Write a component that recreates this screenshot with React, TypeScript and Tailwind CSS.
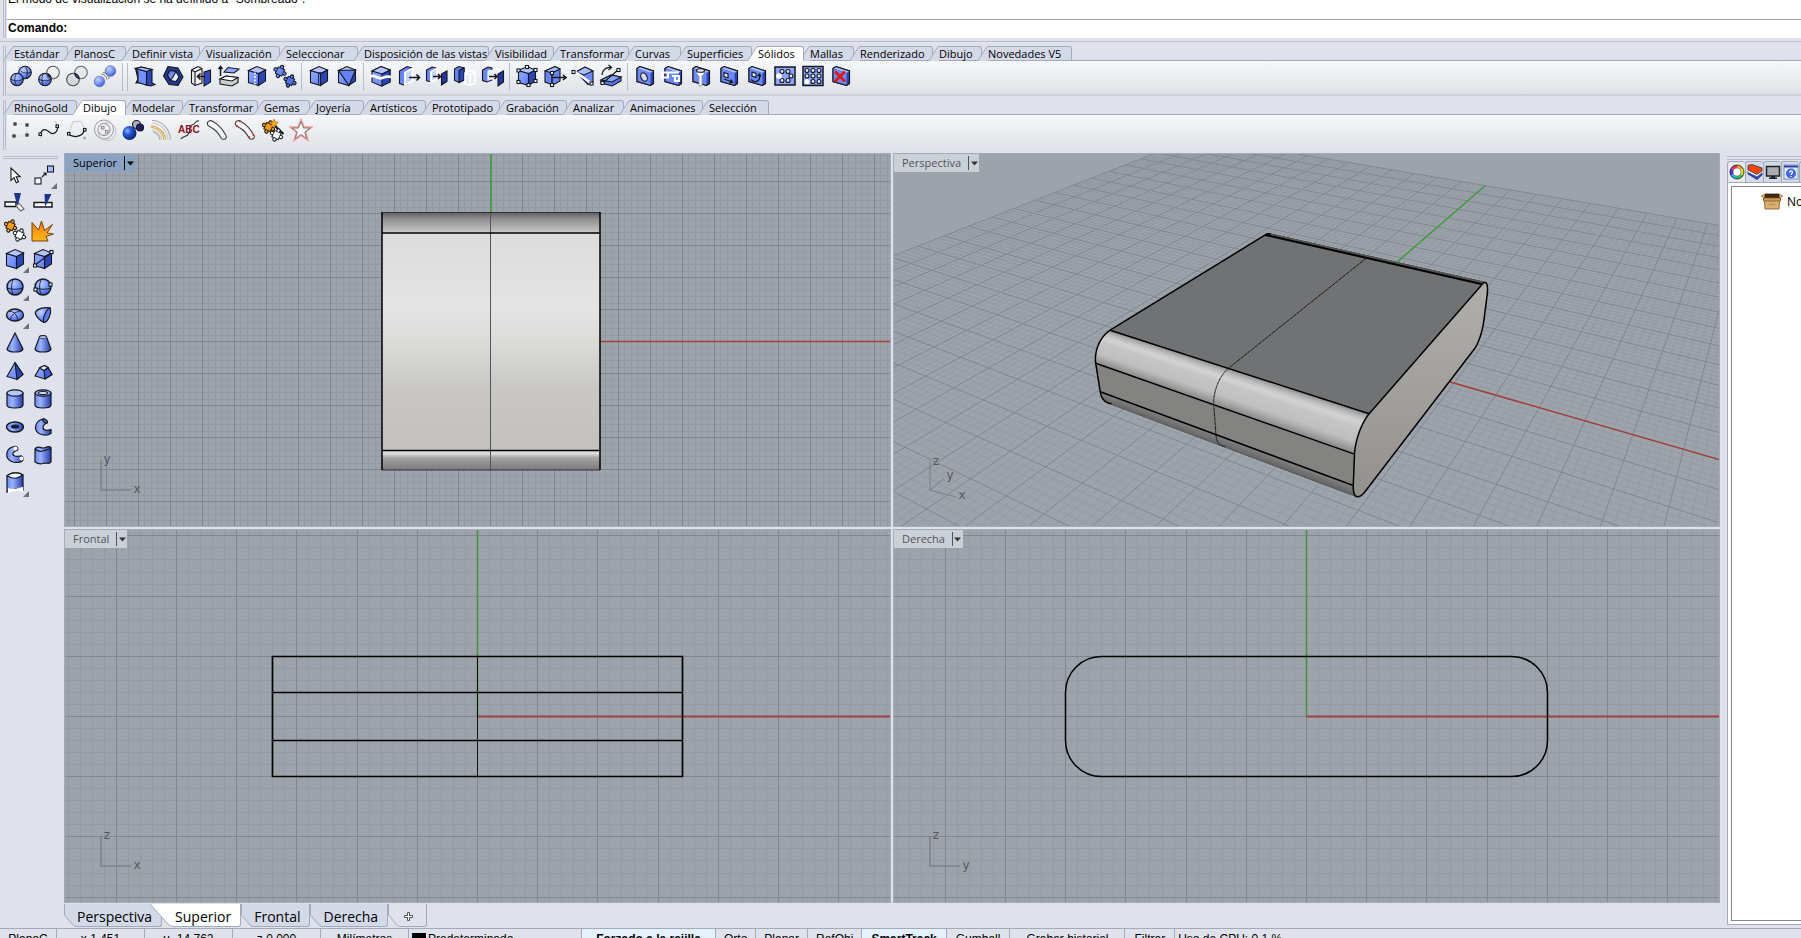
import React from 'react'
import clsx from 'clsx'

type IconProps = { children: React.ReactNode }
type Vec3 = [number, number, number]
type Tab = { label: string; width: number }

const INK = '#15171c'

function Icon({ children }: IconProps) {
  return (
    <svg className="w-6 h-6 shrink-0" viewBox="0 0 24 24" fill="none" stroke={INK} strokeWidth="1.1" aria-hidden="true">
      {children}
    </svg>
  )
}

function Gradients() {
  return (
    <svg className="absolute w-0 h-0" aria-hidden="true">
      <defs>
        <radialGradient id="ball" cx="0.35" cy="0.3" r="0.8">
          <stop offset="0" stopColor="#c2d2ff" />
          <stop offset="0.5" stopColor="#7b98ff" />
          <stop offset="1" stopColor="#2f4cc0" />
        </radialGradient>
        <radialGradient id="darkBall" cx="0.35" cy="0.35" r="0.8">
          <stop offset="0" stopColor="#8fb4ff" />
          <stop offset="0.35" stopColor="#2458d8" />
          <stop offset="1" stopColor="#04124e" />
        </radialGradient>
        <linearGradient id="face" x1="0" y1="0" x2="1" y2="1">
          <stop offset="0" stopColor="#94aeff" />
          <stop offset="1" stopColor="#5f7df6" />
        </linearGradient>
        <linearGradient id="tube">
          <stop offset="0" stopColor="#6c8cf8" />
          <stop offset="0.35" stopColor="#9ab2ff" />
          <stop offset="1" stopColor="#233ca8" />
        </linearGradient>
        <linearGradient id="flame" x1="0" y1="0" x2="0" y2="1">
          <stop offset="0" stopColor="#f07c0c" />
          <stop offset="1" stopColor="#ffb81c" />
        </linearGradient>
        <linearGradient id="rollTop" x1="0" y1="0" x2="0" y2="1">
          <stop offset="0" stopColor="#5a5a5c" />
          <stop offset="0.3" stopColor="#8c8c8e" />
          <stop offset="1" stopColor="#c8c8c8" />
        </linearGradient>
        <linearGradient id="sheet" x1="0" y1="0" x2="0" y2="1">
          <stop offset="0" stopColor="#dcdcdc" />
          <stop offset="0.35" stopColor="#e4e4e4" />
          <stop offset="0.5" stopColor="#dbdbd9" />
          <stop offset="0.72" stopColor="#c8c7c5" />
          <stop offset="1" stopColor="#c3c1be" />
        </linearGradient>
        <linearGradient id="rollBottom" x1="0" y1="0" x2="0" y2="1">
          <stop offset="0" stopColor="#c9c9c9" />
          <stop offset="0.15" stopColor="#e2e2e2" />
          <stop offset="0.4" stopColor="#a3a3a3" />
          <stop offset="1" stopColor="#7a7a7a" />
        </linearGradient>
        <linearGradient id="sideFace" x1="0" y1="0" x2="0" y2="1">
          <stop offset="0" stopColor="#b1afab" />
          <stop offset="1" stopColor="#93918e" />
        </linearGradient>
      </defs>
    </svg>
  )
}

function Cube() {
  return (
    <>
      <path d="M3.5 6.5 13.5 9.5V21.5L3.5 18.5Z" fill="url(#face)" />
      <path d="M13.5 9.5 20.5 6V17L13.5 21.5Z" fill="#2c45b8" />
      <path d="M3.5 6.5 12 2.5 20.5 6 13.5 9.5Z" fill="#b3c6ff" />
    </>
  )
}

function Slab() {
  return (
    <>
      <path d="M4 4.5 7 2.5 20.5 7V19.5L17.5 21.5 4 17.5Z" fill="#2c45b8" />
      <path d="M4 4.5 7 2.5 20.5 7 17.5 9Z" fill="#a7bcff" stroke="none" />
      <path d="M4 4.5 17.5 9V21.5L4 17.5Z" fill="#6b89f7" stroke="none" />
      <path d="M4 4.5 7 2.5 20.5 7V19.5L17.5 21.5 4 17.5Z" />
    </>
  )
}

function Node({ x, y }: { x: number; y: number }) {
  return <rect x={x - 1.5} y={y - 1.5} width="3" height="3" fill="#fff" />
}

function Piece({ x, y, fill }: { x: number; y: number; fill: string }) {
  return (
    <path
      transform={`translate(${x} ${y}) rotate(25)`}
      d="M-3.500-3.500H-1A1.700 1.700 0 1 1 1-3.500H3.500V-1A1.700 1.700 0 1 1 3.500 1V3.500H1A1.700 1.700 0 1 1-1 3.500H-3.500V1A1.700 1.700 0 1 1-3.500-1Z"
      fill={fill}
      strokeWidth="1"
    />
  )
}

const solidIcons: Record<string, React.ReactNode> = {
  union: (
    <>
      <circle cx="16" cy="8.5" r="6.3" fill="url(#ball)" />
      <circle cx="8" cy="15.5" r="6.3" fill="url(#ball)" />
      <path d="M8 9.200c-3 3-3 9.500 0 12.600M1.800 15c4 2.500 8.500 2.500 12.400 0M16 2.200c2.500 2.500 3 8 1 12.400M12 7.500c3 2 7 2 10 .6" strokeWidth="0.8" />
    </>
  ),
  difference: (
    <>
      <circle cx="8" cy="15.5" r="6.3" fill="url(#ball)" />
      <path d="M9.900 9.500a6.300 6.300 0 0 1 4.300 5 6.300 6.300 0 0 1-4.300-5z" fill="#16287c" />
      <circle cx="16" cy="8.5" r="6.3" stroke="#555" />
      <path d="M7 9.300c-3 3-2.500 9.500 0 12.400M1.800 15c4 2.500 8.500 2.500 12.400 0" strokeWidth="0.8" />
    </>
  ),
  intersection: (
    <>
      <circle cx="8" cy="15.5" r="6.3" stroke="#444" fill="#d8dae0" />
      <circle cx="16" cy="8.5" r="6.3" stroke="#666" fill="#e0e2e8" fillOpacity="0.6" />
      <path d="M9.800 9.500a6.300 6.300 0 0 1 4.400 5 6.300 6.300 0 0 1-4.400-5z" fill="#3b58cf" />
    </>
  ),
  split: (
    <>
      <circle cx="17.500" cy="7" r="5.300" fill="url(#ball)" stroke="#6a78b0" strokeWidth="0.800" />
      <circle cx="6.500" cy="17.500" r="5.300" fill="url(#ball)" stroke="#6a78b0" strokeWidth="0.800" />
      <path d="M10 8.500c2.500 0 6 3 6 6.500M8.500 10c2.500 0 5.500 3 5.500 5.500" stroke="#777" strokeWidth="1" />
    </>
  ),
  bend: (
    <>
      <path d="M2.500 4.500 8 3 19 5.500V19l3 1.500-4 1.500-5-1V20l-6-1.500-4 .5L5 15z" fill="#2c45b8" />
      <path d="M2.500 4.500 13.500 7.500V21L5 18.500V8z" fill="#7391fb" />
      <path d="M2.500 4.500 8 3l11 2.500-5.500 2z" fill="#a9beff" />
    </>
  ),
  shell: (
    <>
      <path d="M7 2.500 17 4l5 9-5 8.500-9-1L2.500 12z" fill="#22388f" />
      <path d="M9 6.500 15 7.500 18 13l-3 4.500-5.500-1L6.500 11z" fill="#eef" />
      <path d="M9 6.500 15 7.500 12 13l-2.500 3.500-3-5.500z" fill="#6d8cf8" />
    </>
  ),
  offset: (
    <>
      <path d="M2.500 6 9 2.500 13 4.500V19L6 21.500 2.500 19z" fill="#eee" />
      <path d="M6 8 13 4.500M6 8v13.500M2.500 6 6 8" />
      <path d="M15 8 21.500 6v12L15 22z" fill="#2f49c4" />
      <path d="M16 12.500H9M11.500 9.500l-3 3 3 3" strokeWidth="1.600" />
    </>
  ),
  extrudeUp: (
    <>
      <path d="M3 15 9 12 21 13.500v5L15 22 3 20z" fill="#ccc" />
      <path d="M3 15 9 12 21 13.500 15 17z" fill="#fff" />
      <path d="M7 8 11 3.500l11 1.500-5 4z" fill="#8fa9ff" />
      <path d="M3.500 12V3M1.500 5l2-2.500 2 2.500" strokeWidth="1.500" />
    </>
  ),
  seam: (
    <>
      <Cube />
      <path d="M10 8.500V20.500" stroke="#fff" strokeWidth="1.500" strokeDasharray="2 1.500" />
    </>
  ),
  puzzle: (
    <>
      <Piece x={7} y={7.500} fill="#6d8cf8" />
      <Piece x={17} y={17} fill="#5371e6" />
    </>
  ),
  fillet: (
    <>
      <Cube />
      <path d="M12 8.500c3 1 5-.5 7.500-2M11.500 20V9" strokeWidth="0.800" />
    </>
  ),
  chamfer: (
    <>
      <Cube />
      <path d="M3.500 6.500 20.500 6 14 21.500z" fill="#6582f4" />
    </>
  ),
  cutPlane: (
    <>
      <path d="M3 7 12 2.500 21 6v12l-9 4-9-4z" fill="url(#face)" />
      <path d="M21 6v12l-8 4V10z" fill="#2c45b8" />
      <path d="M3 7 12 2.500 21 6 13 10z" fill="#b3c6ff" />
      <path d="M1 13c5-4 7 3 12 1 4-1.500 6-2 9-1" stroke="#fff" strokeWidth="2.800" />
    </>
  ),
  moveFace: (
    <>
      <path d="M2.500 7 10 2.500 15 4v13l-7 4.500-5.500-2z" fill="#6885f4" />
      <path d="M8 8.500 15.500 4.500V17L8 21z" fill="#c9d5ff" stroke="#fff" strokeWidth="1.800" />
      <path d="M12 13.500h10M19.500 10.500l3 3-3 3" strokeWidth="1.500" />
    </>
  ),
  extrudeFace: (
    <>
      <path d="M1.500 6 7 3 11 4v11l-5 3-4.500-1.500z" fill="#6885f4" />
      <path d="M6 7.500 12 4.500V15l-6 3z" fill="#c9d5ff" stroke="#fff" strokeWidth="1.800" />
      <path d="M16.500 10 22 7v10.500L16.500 21z" fill="#20389f" />
      <path d="M8 12.500h7.500M13 10l2.500 2.500L13 15" strokeWidth="1.500" />
    </>
  ),
  copyFace: (
    <>
      <path d="M1.500 5 6 2.500 11 4v12l-5 2.500-4.500-2z" fill="#6885f4" />
      <path d="M6 6.500 11 4v12l-5 2.500z" fill="#2c45b8" />
      <path d="M12 9 17 6.500 22 8v11l-5 2.500-5-2zM12 9l5 2 5-3M17 11v10.500" stroke="#fff" strokeWidth="1.500" />
    </>
  ),
  moveHole: (
    <>
      <path d="M1.500 6 7 3 11 4v12l-5 2-4.500-1.500z" fill="#6885f4" />
      <path d="M7 7 18 5v8L7 16z" fill="#eef1ff" stroke="#fff" />
      <path d="M17 10 22.500 7v11L17 22z" fill="#20389f" />
      <path d="M8 12.500h8M13.500 10l2.500 2.500-2.500 2.500" strokeWidth="1.500" />
    </>
  ),
  cage: (
    <>
      <Cube />
      <Node x={3.5} y={6.500} />
      <Node x={12} y={3} />
      <Node x={20.5} y={6} />
      <Node x={13.5} y={21} />
      <Node x={3.5} y={18} />
      <Node x={20.5} y={17} />
    </>
  ),
  moveEdge: (
    <>
      <path d="M2 7 12 2.500 17 5v12l-7 4-8-3z" fill="#6885f4" />
      <path d="M2 7 12 2.500 17 5l-8 4z" fill="#a9beff" />
      <path d="M9 9v12M9 13.500h14M20 11l3 2.500-3 2.500" strokeWidth="1.500" />
      <Node x={9} y={9} />
      <Node x={9} y={21} />
    </>
  ),
  wedge: (
    <>
      <path d="M5 8 14 3l8 4v11l-5 2.500z" fill="#6d8cf8" />
      <path d="M5 8 14 3l8 4-9 4z" fill="#a9beff" />
      <path d="M3 7 20 19" stroke="#fff" strokeWidth="2.500" />
      <Node x={2.5} y={8} />
      <Node x={20.5} y={19.5} />
    </>
  ),
  rotateEdge: (
    <>
      <path d="M2 16 12 11 22 13v4l-9 5-11-3z" fill="#5673ec" />
      <path d="M2 16 12 11 22 13l-9 5z" fill="#8ca6ff" />
      <path d="M4 19 19 6M3 11C3 6 7 3 12 3.500M9.500 1l3 2.500-3 2.500" strokeWidth="1.300" />
      <Node x={19.5} y={6} />
      <Node x={3.5} y={19} />
    </>
  ),
  hole: (
    <>
      <Slab />
      <ellipse cx="11" cy="13" rx="3" ry="4.500" fill="#d8dce8" transform="rotate(-25 11 13)" />
    </>
  ),
  punch: (
    <>
      <Slab />
      <path d="M1 8.500h6v5H1zM8 8.500h10M11 12h7v5h-4v-5" stroke="#fff" strokeWidth="2" />
    </>
  ),
  revolveHole: (
    <>
      <Slab />
      <path d="M8 7h7v3l-2 2v10h-3V12l-2-2z" fill="#fff" stroke="#999" strokeWidth="0.800" />
      <ellipse cx="11.500" cy="6.500" rx="4" ry="1.800" fill="#dde4ff" />
    </>
  ),
  slideHole: (
    <>
      <Slab />
      <path d="M7 8.500 11 10v4l-4-1.500z" fill="#dde4ff" />
      <path d="M7 15l8 3M13.500 15.500l2 2.700-3 .8" strokeWidth="1.300" />
    </>
  ),
  turnHole: (
    <>
      <Slab />
      <path d="M7 8 11 9.500v4L7 12z" fill="#dde4ff" />
      <path d="M6 15.500c3 3 7 3 8.500-1V11M12.500 12l2-2 1.500 2.500" strokeWidth="1.300" />
    </>
  ),
  polarArray: (
    <>
      <rect x="2" y="3" width="20" height="18" fill="#8aa4ff" strokeWidth="1.500" />
      {[[9, 7.500], [15, 7.500], [18, 12], [15, 16.500], [9, 16.500]].map(([x, y]) => (
        <circle key={`${x}-${y}`} cx={x} cy={y} r="2" fill="#dfe6ff" />
      ))}
      <circle cx="6" cy="12" r="2.300" fill="#fff" stroke="#fff" />
    </>
  ),
  gridArray: (
    <>
      <rect x="2" y="2.500" width="20" height="19" fill="#8aa4ff" strokeWidth="1.500" />
      {[6, 12, 18].map((x) =>
        [6.500, 12, 17.500].map((y) => (
          <circle
            key={`${x}-${y}`}
            cx={x}
            cy={y}
            r="2"
            fill={x === 6 && y > 17 ? '#fff' : '#dfe6ff'}
            stroke={x === 6 && y > 17 ? '#fff' : INK}
          />
        )),
      )}
    </>
  ),
  deleteHole: (
    <>
      <Slab />
      <path d="M6 7.500 16 17.500M16 7.500 6 17.500" stroke="#ee1111" strokeWidth="2.600" />
    </>
  ),
}

const drawIcons: Record<string, React.ReactNode> = {
  points: (
    <>
      {[[6, 6], [18, 7], [5, 18], [18, 17]].map(([x, y]) => (
        <rect key={`${x}-${y}`} x={x - 1} y={y - 1} width="2" height="2" fill="#fff" />
      ))}
      <path d="M9 6h6M18 10v4M8 18h7" stroke="#bbb" strokeWidth="0.800" strokeDasharray="1 2" />
    </>
  ),
  curve: (
    <>
      <path d="M3.500 15.500C6 9 10 12 13 14.500s8 0 7.500-6" strokeWidth="1.200" />
      <path d="M4 20c0-3 0-4 1-6M18 3l3 5" stroke="#aaa" strokeWidth="0.800" />
      <rect x="2" y="15" width="2.500" height="2.500" fill="#fff" />
      <rect x="19" y="7" width="2.500" height="2.500" fill="#fff" />
    </>
  ),
  polycurve: (
    <>
      <path d="M3.500 15.500C7 20 17 20 19.500 12" strokeWidth="1.200" />
      <path d="M4 15 8 3.500h8L20 11" stroke="#bbb" strokeWidth="0.800" />
      <rect x="2.500" y="14.500" width="2.500" height="2.500" fill="#fff" />
      <rect x="18.500" y="10.500" width="2.500" height="2.500" fill="#fff" />
      <circle cx="19.500" cy="20" r="1.500" fill="#aaa" stroke="none" />
    </>
  ),
  circles: (
    <>
      <circle cx="11" cy="11.500" r="9.500" stroke="#9a9a9a" strokeWidth="1" />
      <circle cx="11" cy="11.500" r="6" stroke="#888" strokeWidth="1" />
      <circle cx="14" cy="13.500" r="9" stroke="#c4c4c4" strokeWidth="1" />
      <rect x="8.500" y="8.500" width="2.500" height="2.500" stroke="#777" strokeWidth="0.800" />
      <rect x="12.500" y="12.500" width="2.500" height="2.500" stroke="#777" strokeWidth="0.800" />
    </>
  ),
  balls: (
    <>
      <circle cx="8.500" cy="15" r="7" fill="url(#darkBall)" stroke="none" />
      <circle cx="15.500" cy="6.500" r="4" fill="#aab0c4" />
      <circle cx="19" cy="9.500" r="3.500" fill="#221c66" />
    </>
  ),
  arcs: (
    <>
      <path d="M3 2.500C13 2.500 21 11 21.500 21.500M4 14c4 1 6 3 7 8" stroke="#aaa" />
      <path d="M3 5C11 5 18 12 19 21.500M3 12c4 1 8 4 10 9.500" stroke="#c9c9c9" />
      <path d="M2 8.500c7 .5 12.500 6 14 13" stroke="#c3a04c" strokeWidth="2.600" />
      <path d="M2 8.500c7 .5 12.500 6 14 13" stroke="#f4dfa0" strokeWidth="1.200" />
    </>
  ),
  text: (
    <>
      <path d="M22 3c-4-1-3 3-7 4s-1 3-3 8-6 2-8 6" stroke="#333" />
      <text x="1" y="15" fontSize="10" fontWeight="700" fontFamily="Liberation Sans, sans-serif" fill="#8c1420" stroke="none">
        ABC
      </text>
    </>
  ),
  slot: (
    <path d="M2.500 6.500C1.500 3.500 5 1.500 8 3.500c6 3.500 9.500 7.500 13 14 1.500 3.500-3 5-5 2.500-3-5.500-5-8-11.500-11.500-1-.5-1.700-1-2-2z" fill="#f4f4f4" stroke="#444" />
  ),
  slotPoints: (
    <>
      <path d="M2.500 6.500C1.500 3.500 5 1.500 8 3.500c6 3.500 9.500 7.500 13 14 1.500 3.500-3 5-5 2.500-3-5.500-5-8-11.500-11.500-1-.5-1.700-1-2-2z" fill="#f4f4f4" stroke="#444" />
      <path d="M7 2.500v1.500M3 8h1.500M15.500 19h1.500M20.500 16.500v1.500" stroke="#e11" strokeWidth="1.500" />
    </>
  ),
  explode: (
    <>
      <Piece x={7.500} y={9} fill="#f5980c" />
      <path d="M13 1l1.300 3 3.200.3-2.500 2 .8 3.200L13 7.800l-2.800 1.700.8-3.200-2.500-2 3.200-.3z" fill="#ffa514" stroke="#c26a00" strokeWidth="0.600" />
      <path d="M14 8 22.500 16" strokeWidth="2.200" />
      <Piece x={15.500} y={17} fill="#fff" />
    </>
  ),
  star: (
    <>
      <path d="M12 1.500 15 9h8l-6.500 5 2.500 8.500-7-5-7 5L7.500 14 1 9h8z" stroke="#f39a9a" strokeWidth="1.500" />
      <path d="M12 3.500 14.500 10h6.500l-5.200 4 1.900 6.500-5.700-4-5.700 4L8.200 14 3 10h6.500z" fill="#f6f6f8" stroke="#666" strokeWidth="0.800" />
    </>
  ),
}

const sideIcons: Record<string, React.ReactNode> = {
  pointer: <path d="M8 5v12.500l3-2.800 2.300 5 2.200-1-2.300-4.900h4z" fill="#fff" strokeWidth="1.100" />,
  control: (
    <>
      <rect x="16.500" y="3" width="6" height="6" fill="#a9beff" />
      <rect x="4" y="15" width="6" height="6" fill="#fff" />
      <path d="M11 14l4-4M12.500 10H15v2.500" />
    </>
  ),
  trim: (
    <>
      <path d="M2 11h11v4.500H2z" fill="#fff" strokeWidth="1.400" />
      <path d="M11 2h7l-3.500 14z" fill="#1c3588" stroke="none" />
      <path d="M13 14.500 16 12.500l5 5.500-3.500 2z" fill="#f4f4f4" stroke="#666" />
    </>
  ),
  splitCurve: (
    <>
      <path d="M3 11.500h18V16H3z" fill="#fff" strokeWidth="1.400" />
      <path d="M13.500 3h7L14 16z" fill="#1c3588" stroke="none" />
    </>
  ),
  join: (
    <>
      <Piece x={7.500} y={7} fill="#ff9f10" />
      <Piece x={16.500} y={16} fill="#fff" />
    </>
  ),
  explode: <path d="M1 3.500 7.500 11 10.500 2l3 9.500 8-6-5.500 8.500 6.500 1-7.500 2.500 2 4.500H1z" fill="url(#flame)" stroke="#6a3400" strokeWidth="0.900" />,
  box: <Cube />,
  boxPoints: (
    <>
      <Cube />
      <path d="M4 18 20 6" />
      <Node x={4} y={18.500} />
      <Node x={20.5} y={5} />
    </>
  ),
  sphere: (
    <>
      <circle cx="12" cy="12" r="8" fill="url(#ball)" strokeWidth="1.400" />
      <path d="M10.500 4c-2.500 4-2.500 12 0 16M4 13c5 1.700 11 1.700 16 0" strokeWidth="0.900" />
    </>
  ),
  spherePoints: (
    <>
      <circle cx="12" cy="12" r="8" fill="url(#ball)" strokeWidth="1.400" />
      <path d="M10.500 4c-2.500 4-2.500 12 0 16M4 13c5 1.700 11 1.700 16 0" strokeWidth="0.900" />
      <Node x={4.5} y={14.500} />
      <Node x={19.5} y={9.500} />
    </>
  ),
  ellipsoid: (
    <>
      <ellipse cx="12" cy="12" rx="8.500" ry="6" fill="url(#ball)" strokeWidth="1.400" />
      <path d="M6 8c6 1 8 4 9 9.500M17.500 8c-6 1-9 4-10 8.500" strokeWidth="0.900" />
    </>
  ),
  paraboloid: (
    <>
      <path d="M4.500 9C7 5 14 4 19 5c1 5-2 13-6 14.500C9 18 3.500 12 4.500 9z" fill="url(#ball)" strokeWidth="1.300" />
      <path d="M19 5c2 5-2 14-6 14.500-2-3.500 2-13 6-14.500z" fill="#5c7bf0" />
    </>
  ),
  cone: <path d="M12 2 20 18c-1 4-15 4-16 0z" fill="url(#tube)" strokeWidth="1.200" />,
  cutCone: (
    <>
      <path d="M8.500 6c0-2 7-2 7 0L20 18c-1 4-15 4-16 0z" fill="url(#tube)" strokeWidth="1.200" />
      <ellipse cx="12" cy="6.200" rx="3.500" ry="1.500" fill="#b9caff" strokeWidth="0.700" />
    </>
  ),
  pyramid: (
    <>
      <path d="M12 3.500 20 15.500l-6 5-10-3z" fill="url(#face)" />
      <path d="M12 3.500 20 15.500l-6 5z" fill="#2c45b8" />
    </>
  ),
  cutPyramid: (
    <>
      <path d="M9 8.500 14 6.500l3 2 4 7-7 4.500-10-3z" fill="url(#face)" />
      <path d="M13 11.500l4-3 4 7-7 4.500z" fill="#3f5bd0" />
      <path d="M8.500 9 13 6.500 17 8.500l-4 3z" fill="#dfe6ff" />
    </>
  ),
  cylinder: (
    <>
      <path d="M4 6v12c0 4 16 4 16 0V6z" fill="url(#tube)" strokeWidth="1.200" />
      <ellipse cx="12" cy="6" rx="8" ry="3.200" fill="#b3c6ff" strokeWidth="1.200" />
    </>
  ),
  tube: (
    <>
      <path d="M4 6v12c0 4 16 4 16 0V6z" fill="url(#tube)" strokeWidth="1.200" />
      <ellipse cx="12" cy="6" rx="8" ry="3.200" fill="#8aa4ff" strokeWidth="1.200" />
      <ellipse cx="12" cy="6" rx="4.500" ry="1.500" fill="#dde4ff" />
    </>
  ),
  torus: (
    <>
      <ellipse cx="12" cy="12" rx="8.500" ry="5" fill="url(#tube)" strokeWidth="1.400" />
      <ellipse cx="12" cy="11.500" rx="3.500" ry="1.500" fill="#0f1c5c" />
    </>
  ),
  pipe: (
    <>
      <path d="M12 4C4 6 2 15 8 18.500c4 2 9 2 12 0v-4c-4 1.500-8 1-8-2 0-2 1.500-3.500 4-4.500-.5-2.500-2-4-4-4z" fill="url(#tube)" strokeWidth="1.200" />
      <ellipse cx="14" cy="6" rx="2.800" ry="1.500" fill="#4a66d8" transform="rotate(35 14 6)" />
    </>
  ),
  pipeRound: (
    <>
      <path d="M11 3.500c-9 2-10 13-1 15.500 4 1 9 .5 10-2 1-2-1-4.500-3-4-4 1-8 0-7-3 .5-1.500 2-2 4-2.500 2-1 .5-5-3-4z" fill="url(#tube)" strokeWidth="1.200" />
      <circle cx="12.500" cy="5.500" r="2" fill="#fff" stroke="none" />
      <circle cx="18.500" cy="15.500" r="2" fill="#fff" stroke="none" />
    </>
  ),
  extrudeCurve: (
    <>
      <path d="M4 6c2-4 5-1 8-1s5-3 8-.5V19c-2 3-5 0-8 1.500-3 1-5 .5-8-1.500z" fill="url(#tube)" strokeWidth="1.200" />
      <path d="M4 6c3 2.500 5 3 8 2s5-2 8-2" />
    </>
  ),
  patch: (
    <>
      <path d="M4 5c4-4 12-4 16-1v15c-4-2-12-1-16 2z" fill="url(#tube)" strokeWidth="1.200" />
      <path d="M4 5c4 1 5 3 9 2 3 0 4-2 7-3-4-3-12-3-16 1z" fill="#eef1ff" />
      <path d="M5 17c5 2 10 0 15-1v5c-4-2-11-1-15 1z" fill="#fff" stroke="none" />
    </>
  ),
}

const solidGroups = [
  ['union', 'difference', 'intersection', 'split'],
  ['bend', 'shell', 'offset', 'extrudeUp', 'seam', 'puzzle'],
  ['fillet', 'chamfer'],
  ['cutPlane', 'moveFace', 'extrudeFace', 'copyFace', 'moveHole'],
  ['cage', 'moveEdge', 'wedge', 'rotateEdge'],
  ['hole', 'punch', 'revolveHole', 'slideHole', 'turnHole', 'polarArray', 'gridArray', 'deleteHole'],
]

const mainTabs: Tab[] = [
  { label: 'Estándar', width: 60 },
  { label: 'PlanosC', width: 58 },
  { label: 'Definir vista', width: 74 },
  { label: 'Visualización', width: 80 },
  { label: 'Seleccionar', width: 78 },
  { label: 'Disposición de las vistas', width: 131 },
  { label: 'Visibilidad', width: 65 },
  { label: 'Transformar', width: 75 },
  { label: 'Curvas', width: 52 },
  { label: 'Superficies', width: 71 },
  { label: 'Sólidos', width: 52 },
  { label: 'Mallas', width: 50 },
  { label: 'Renderizado', width: 79 },
  { label: 'Dibujo', width: 49 },
  { label: 'Novedades V5', width: 90 },
]

const goldTabs: Tab[] = [
  { label: 'RhinoGold', width: 69 },
  { label: 'Dibujo', width: 49 },
  { label: 'Modelar', width: 57 },
  { label: 'Transformar', width: 75 },
  { label: 'Gemas', width: 52 },
  { label: 'Joyería', width: 54 },
  { label: 'Artísticos', width: 62 },
  { label: 'Prototipado', width: 74 },
  { label: 'Grabación', width: 67 },
  { label: 'Analizar', width: 57 },
  { label: 'Animaciones', width: 79 },
  { label: 'Selección', width: 66 },
]

const flyouts = ['control', 'box', 'sphere', 'ellipsoid', 'patch']

function TabStrip({ tabs, active }: { tabs: Tab[]; active: string }) {
  return (
    <div role="tablist" className="flex h-[15px] pl-[8px]">
      {tabs.map(({ label, width }) => {
        const on = label === active
        return (
          <button
            key={label}
            role="tab"
            aria-selected={on}
            className={clsx('relative flex shrink-0 -ml-1 text-left text-[11px] leading-[14px] whitespace-nowrap', on && 'z-10')}
            style={{ width: width + 4 }}
          >
            <svg className="w-[10px] h-[15px] shrink-0" viewBox="0 0 10 15" aria-hidden="true">
              <path d="M0 15 8 1.500 10 0.500V15Z" fill={on ? '#fff' : '#d4d9e8'} />
              <path d="M0 14.500 8 2 10 .5" fill="none" stroke="#a2abbc" />
            </svg>
            <span
              className={clsx(
                'h-[15px] flex-1 min-w-0 border-t border-r rounded-tr-[3px] border-[#a2abbc]',
                on ? 'bg-white' : 'bg-[#d4d9e8] border-b',
              )}
            >
              {label}
            </span>
          </button>
        )
      })}
    </div>
  )
}

function Grip() {
  return <div className="w-[3px] ml-[3px] mr-px border-x border-[#b4bbc9] shrink-0" />
}

function IconButton({ name, icons }: { name: string; icons: Record<string, React.ReactNode> }) {
  return (
    <button aria-label={name} className="relative w-7 h-7 flex items-center justify-center">
      <Icon>{icons[name]}</Icon>
      {icons === sideIcons && flyouts.includes(name) && (
        <svg className="absolute right-0 bottom-0 w-[6px] h-[6px]" viewBox="0 0 6 6" aria-hidden="true">
          <path d="M6 0V6H0Z" fill="#6e7076" />
        </svg>
      )}
    </button>
  )
}

function Axis({ x, y, labels }: { x: number; y: number; labels: [string, string] }) {
  return (
    <g>
      <path d={`M${x} ${y - 30}V${y}H${x + 30}`} fill="none" stroke="#7d8087" strokeWidth="1.500" />
      <g fontSize="12" fontFamily="DejaVu Sans, sans-serif" fill="#55585e" textAnchor="middle">
        <text x={x + 6} y={y - 27}>{labels[1]}</text>
        <text x={x + 36} y={y + 3}>{labels[0]}</text>
      </g>
    </g>
  )
}

// Orthogonal construction plane, 70 units each way with a heavy line every 5.
function PlaneGrid({ cx, cy, unit }: { cx: number; cy: number; unit: number }) {
  let minor = ''
  let major = ''
  const size = 70 * unit
  for (let i = -70; i <= 70; i++) {
    const x = Math.floor(cx + i * unit) + 0.5
    const y = Math.floor(cy + i * unit) + 0.5
    const d = `M${x} ${cy - size}V${cy + size}M${cx - size} ${y}H${cx + size}`
    if (i % 5 === 0) major += d
    else minor += d
  }
  return (
    <g fill="none">
      <path d={minor} stroke="#939aa2" />
      <path d={major} stroke="#83868e" />
    </g>
  )
}

// Camera 100 units from the origin, 30 degrees above the plane.
function project([x, y, z]: Vec3) {
  const right = 0.866 * x + 0.5 * y
  const up = -0.25 * x + 0.433 * y + 0.866 * z
  const depth = 100 - 0.433 * x + 0.75 * y - 0.5 * z
  return `${(412.5 + (779 * right) / depth).toFixed(2)} ${(186.5 - (779 * up) / depth).toFixed(2)}`
}

const line = (...pts: Vec3[]) => 'M' + pts.map(project).join('L')

function corner(x: number, cy: number, cz: number, from: number, to: number, steps = 12): Vec3[] {
  return Array.from({ length: steps + 1 }, (_, i) => {
    const a = ((from + ((to - from) * i) / steps) * Math.PI) / 180
    return [x, cy + 3 * Math.cos(a), cz + 3 * Math.sin(a)]
  })
}

function bands(cy: number, cz: number, from: number, to: number, shades: number[]) {
  const steps = 24
  const left = corner(-17, cy, cz, from, to, steps)
  const right = corner(17, cy, cz, from, to, steps)
  return Array.from({ length: steps }, (_, i) => {
    const t = (i / (steps - 1)) * (shades.length - 1)
    const k = Math.min(Math.floor(t), shades.length - 2)
    const v = Math.round(shades[k] + (shades[k + 1] - shades[k]) * (t - k))
    const fill = `rgb(${v},${v},${v})`
    return <path key={i} d={line(left[i], right[i], right[i + 1], left[i + 1]) + 'Z'} fill={fill} stroke={fill} strokeWidth="0.600" />
  })
}

function PerspectiveScene() {
  let minor = ''
  let major = ''
  for (let i = -70; i <= 70; i++) {
    const d = line([i, -70, 0], [i, 70, 0]) + line([-70, i, 0], [70, i, 0])
    if (i % 5 === 0) major += d
    else minor += d
  }
  const outline = (x: number) => [
    ...corner(x, 17, 2, 0, 90),
    ...corner(x, -17, 2, 90, 180),
    ...corner(x, -17, -2, 180, 270),
    ...corner(x, 17, -2, 270, 360),
  ]
  return (
    <g fill="none" strokeLinejoin="round">
      <path d={minor} stroke="#8c929a" strokeWidth="0.700" opacity="0.700" />
      <path d={major} stroke="#83868e" strokeWidth="1" />
      <path d={line([0, 0, 0], [0, 70, 0])} stroke="#449a45" strokeWidth="1.500" />
      <path d={line([0, 0, 0], [70, 0, 0])} stroke="#a0433f" strokeWidth="1.500" />

      {bands(17, 2, 0, 90, [60, 90])}
      {bands(-17, -2, 270, 180, [80, 90, 128])}
      <path d={line([-17, -20, 2], [17, -20, 2], [17, -20, -2], [-17, -20, -2]) + 'Z'} fill="#838381" />
      {bands(-17, 2, 180, 90, [138, 165, 192, 196, 198, 214, 190, 150])}
      <path d={line([-17, -17, 5], [17, -17, 5], [17, 17, 5], [-17, 17, 5]) + 'Z'} fill="#717274" />
      <path d={line(...outline(17)) + 'Z'} fill="url(#sideFace)" />

      <g stroke="#000" strokeWidth="1.500">
        <path d={line(...outline(17)) + 'Z'} />
        <path d={line(...corner(-17, 17, 2, 60, 90), ...corner(-17, -17, 2, 90, 180), ...corner(-17, -17, -2, 180, 240))} />
        <path d={line([-17, -17, 5], [17, -17, 5])} />
        <path d={line([-17, 17, 5], [17, 17, 5])} strokeWidth="2" />
        <path d={line([-17, -20, 2], [17, -20, 2])} />
        <path d={line([-17, -20, -2], [17, -20, -2])} />
      </g>
      <path
        d={line([0, 17, 5], ...corner(0, -17, 2, 90, 180), ...corner(0, -17, -2, 180, 240))}
        stroke="#111"
        strokeWidth="0.900"
        strokeDasharray="4 0.500"
      />
      <path d="M36 307V336L62 343M36 336 50 324" stroke="#7d8087" />
      <g fontSize="12" fontFamily="DejaVu Sans, sans-serif" fill="#55585e" textAnchor="middle">
        <text x="42" y="311">z</text>
        <text x="56" y="325">y</text>
        <text x="68" y="345">x</text>
      </g>
    </g>
  )
}

function TopScene() {
  return (
    <g fill="none">
      <PlaneGrid cx={425.5} cy={187.5} unit={6.4} />
      <path d="M426 0V187" stroke="#4b9c4c" strokeWidth="2" />
      <path d="M426 187.500H2000" stroke="#a0433f" strokeWidth="1.500" />
      <rect x="317" y="58" width="218" height="21" fill="url(#rollTop)" />
      <rect x="317" y="79" width="218" height="217" fill="url(#sheet)" />
      <rect x="317" y="296" width="218" height="20" fill="url(#rollBottom)" />
      <path d="M425.500 58V316" stroke="#555" />
      <path d="M317 58.500H535M317 316H535" stroke="#333" />
      <path d="M317 58V316M535 58V316M317 79H535M317 296.500H535" stroke="#000" strokeWidth="1.500" />
      <Axis x={36} y={336} labels={['x', 'y']} />
    </g>
  )
}

function FrontScene() {
  return (
    <g fill="none">
      <PlaneGrid cx={412.5} cy={186.500} unit={12.04} />
      <path d="M412.500 0V186" stroke="#3f963f" strokeWidth="1.500" />
      <path d="M412 186.500H2000" stroke="#a0433f" strokeWidth="2" />
      <path d="M207.500 126.500H617.500V246.500H207.500ZM207.500 162.500H617.500M207.500 210.500H617.500" stroke="#000" strokeWidth="1.700" />
      <path d="M412.500 126V246" stroke="#111" />
      <Axis x={36} y={336} labels={['x', 'z']} />
    </g>
  )
}

function RightScene() {
  return (
    <g fill="none">
      <PlaneGrid cx={412.5} cy={186.500} unit={12.04} />
      <path d="M412.500 0V186" stroke="#3f963f" strokeWidth="1.500" />
      <path d="M412 186.500H2000" stroke="#a0433f" strokeWidth="2" />
      <rect x="171.500" y="126.500" width="482" height="120" rx="36" stroke="#000" strokeWidth="1.500" />
      <Axis x={36} y={336} labels={['y', 'z']} />
    </g>
  )
}

function Viewport({ name, active, children }: { name: string; active?: boolean; children: React.ReactNode }) {
  return (
    <section aria-label={name} className="relative min-w-0 min-h-0 border border-[#a3abba] bg-[#9da3ab] overflow-hidden">
      <svg className="block w-full h-full" aria-hidden="true">
        {children}
      </svg>
      <div
        className={clsx(
          'absolute left-0 top-0 h-[18px] flex items-center text-[11px] leading-[18px]',
          active ? 'bg-[#8aa3c3] text-black' : 'bg-[#cbd0d6] text-[#50545a]',
        )}
      >
        <button className="pl-2 pr-[7px]">{name}</button>
        <button aria-label={`Menú ${name}`} className="h-[14px] w-[11px] border-l border-current flex items-center justify-center">
          <svg className="w-[7px] h-[5px]" viewBox="0 0 7 5" aria-hidden="true">
            <path d="M0 .5H7L3.500 4.500Z" fill={active ? '#000' : '#333'} />
          </svg>
        </button>
      </div>
    </section>
  )
}

function ViewTabs() {
  const tabs = ['Perspectiva', 'Superior', 'Frontal', 'Derecha', '+']
  return (
    <div role="tablist" className="flex h-[25px] pt-px pb-px text-[14px] leading-[25px]">
      {tabs.map((tab) => {
        const on = tab === 'Superior'
        const fill = on ? '#fff' : tab === '+' ? '#dfe2ea' : '#d4d9e8'
        return (
          <button key={tab} role="tab" aria-selected={on} aria-label={tab} className={clsx('relative flex h-[23px]', on && '-ml-3')}>
            {on ? (
              <svg className="w-6 h-[23px]" viewBox="0 0 24 23" aria-hidden="true">
                <path d="M0 0H24V23H22Q20 23 18 20Z" fill={fill} />
                <path d="M0 0 18 20Q20 22.500 24 22.500" fill="none" stroke="#a2abbc" />
              </svg>
            ) : (
              <svg className="w-3 h-[23px]" viewBox="0 0 12 23" aria-hidden="true">
                <path d="M0 0H12V23Q10 23 8 20L0 11Z" fill={fill} />
                <path d="M.5 0V11L8 20Q10 22.500 12 22.500" fill="none" stroke="#a2abbc" />
              </svg>
            )}
            <span
              className={clsx(
                'h-[23px] pr-[9px] border-r border-b border-[#a2abbc] rounded-br-[3px]',
                on ? 'bg-white pl-px' : 'pl-px',
                tab === '+' ? 'bg-[#dfe2ea]' : !on && 'bg-[#d4d9e8]',
              )}
            >
              {tab === '+' ? (
                <svg className="mt-[8px] ml-[3px] mr-1 w-[9px] h-[9px]" viewBox="0 0 9 9" aria-hidden="true">
                  <path d="M3.500 .5h2v3h3v2h-3v3h-2v-3h-3v-2h3z" fill="#fff" stroke="#555" />
                </svg>
              ) : (
                tab
              )}
            </span>
          </button>
        )
      })}
    </div>
  )
}

function SidePanel() {
  const cell = 'w-[18px] h-[21px] flex items-center justify-center border-t border-l border-[#a2abbc] rounded-t-[3px] shrink-0'
  return (
    <aside className="w-[81px] pl-[7px] pt-[3px] pb-[3px] flex flex-col overflow-hidden">
      <div className="h-[4px] border-y border-[#b4bbc9] mb-px shrink-0" />
      <div className="flex shrink-0">
        <button aria-label="Propiedades" className={clsx(cell, 'bg-[#e6e9f0]')}>
          <svg className="w-4 h-4" viewBox="0 0 16 16" fill="none" strokeWidth="3" aria-hidden="true">
            <path d="M8 2.500A5.500 5.500 0 0 1 12.800 5.200" stroke="#f0a020" />
            <path d="M12.800 5.200A5.500 5.500 0 0 1 12.800 10.800" stroke="#d8e020" />
            <path d="M12.800 10.800A5.500 5.500 0 0 1 8 13.500" stroke="#30c040" />
            <path d="M8 13.500A5.500 5.500 0 0 1 3.200 10.800" stroke="#20b8d8" />
            <path d="M3.200 10.800A5.500 5.500 0 0 1 3.200 5.200" stroke="#5030d8" />
            <path d="M3.200 5.200A5.500 5.500 0 0 1 8 2.500" stroke="#e82858" />
            <circle cx="8" cy="8" r="7" stroke="#222" strokeWidth="0.800" />
            <circle cx="8" cy="8" r="4" fill="#fff" stroke="#444" strokeWidth="0.500" />
          </svg>
        </button>
        <button aria-label="Capas" className={clsx(cell, 'bg-[#d4d9e8]')}>
          <svg className="w-4 h-4" viewBox="0 0 16 16" stroke="#222" strokeWidth="0.700" aria-hidden="true">
            <path d="M1 7 10 12 15 8.500V11L10 15.500 1 10z" fill="#2c45c8" />
            <path d="M1 5 10 9 15 5.500V8.500L10 12.500 1 8z" fill="#fff" stroke="none" />
            <path d="M1 1.500 5 .5 15 4V7L10 10.500 1 6z" fill="#f04814" />
          </svg>
        </button>
        <button aria-label="Pantalla" className={clsx(cell, 'bg-[#d4d9e8]')}>
          <svg className="w-4 h-4" viewBox="0 0 16 16" aria-hidden="true">
            <rect x="1.500" y="2.500" width="13" height="9.500" fill="#a8adb0" stroke="#222" strokeWidth="1.500" />
            <path d="M6 12h4v1.500h2V15H4v-1.500h2z" fill="#222" />
          </svg>
        </button>
        <button aria-label="Ayuda" className={clsx(cell, 'bg-[#d4d9e8]')}>
          <svg className="w-4 h-4" viewBox="0 0 16 16" fill="none" aria-hidden="true">
            <rect x="1" y="1" width="14" height="14" fill="#e4eaff" stroke="#8a93b0" />
            <path d="M1 2.500h14" stroke="#2448a8" strokeWidth="2" />
            <circle cx="8" cy="9.500" r="5" fill="#3c66e0" />
            <path d="M6.500 8.500c0-2.500 3.500-2 3 0-.2 1-1.500 1-1.500 2.500M8 12v1" stroke="#fff" strokeWidth="1.300" />
          </svg>
        </button>
        <div className={clsx(cell, 'bg-[#d4d9e8]')} />
      </div>
      <div className="flex-1 min-h-0 border-l border-t border-b border-[#a2abbc] bg-white pl-[3px] pt-[3px] pb-[3px]">
        <div className="h-full w-[120px] border border-[#868991] bg-white pt-[5px] pl-[29px] flex items-start gap-1">
          <svg className="w-[22px] h-[18px] shrink-0" viewBox="0 0 22 18" strokeWidth="0.800" aria-hidden="true">
            <path d="M3 5H19L18 17H4z" fill="#d9b070" stroke="#7a5527" />
            <path d="M4 2H18L19 5.500H3z" fill="#3c2713" stroke="#3c2713" />
            <path d="M4 2 .5 4 3 6.500M18 2l3.500 2L19 6.500" fill="#e2bd82" stroke="#7a5527" />
            <path d="M2.500 6h17v3h-17z" fill="#cc9c58" stroke="#7a5527" />
            <path d="M8 12.500h6" stroke="#b07e3c" />
          </svg>
          <span className="text-[12px] leading-[20px]">No</span>
        </div>
      </div>
    </aside>
  )
}

function StatusBar() {
  const cell = 'shrink-0 border-r border-[#a2abbc] text-center'
  return (
    <footer className="h-[10px] shrink-0 overflow-hidden border-t border-[#a2abbc] flex font-['Liberation_Sans',sans-serif] text-[12px] leading-[21px] whitespace-nowrap">
      <div className={clsx(cell, 'w-[57px]')}>PlanoC</div>
      <div className={clsx(cell, 'w-[88px]')}>x 1.451</div>
      <div className={clsx(cell, 'w-[88px]')}>y -14.762</div>
      <div className={clsx(cell, 'w-[88px]')}>z 0.000</div>
      <div className={clsx(cell, 'w-[88px]')}>Milímetros</div>
      <button className={clsx(cell, 'w-[173px] flex gap-[2px] pl-[3px]')}>
        <span className="w-[14px] h-[14px] mt-[4px] bg-black" />
        Predeterminado
      </button>
      <button className={clsx(cell, 'w-[134px] font-bold bg-[#e3f2fc]')}>Forzado a la rejilla</button>
      <button className={clsx(cell, 'px-2')}>Orto</button>
      <button className={clsx(cell, 'px-2')}>Planar</button>
      <button className={clsx(cell, 'px-2')}>RefObj</button>
      <button className={clsx(cell, 'px-[9px] font-bold bg-[#e3f2fc]')}>SmartTrack</button>
      <button className={clsx(cell, 'px-[9px]')}>Gumball</button>
      <button className={clsx(cell, 'px-4')}>Grabar historial</button>
      <button className={clsx(cell, 'px-[9px]')}>Filtrar</button>
      <div className="pl-[3px]">Uso de CPU: 0.1 %</div>
    </footer>
  )
}

export default function App() {
  return (
    <div className="h-screen w-full overflow-hidden flex flex-col bg-[#dfe2ea] text-black font-['Open_Sans',sans-serif]">
      <Gradients />
      <header className="shrink-0">
        <div className="flex h-[38px] overflow-hidden font-['Liberation_Sans',sans-serif] text-[12px]">
          <Grip />
          <div className="flex-1 bg-white">
            <p className="h-[19px] leading-[14px] pl-px -mt-[8px] mb-[8px] whitespace-nowrap">
              El modo de visualización se ha definido a "Sombreado".
            </p>
            <div className="flex h-[19px] items-start border-t border-[#a0a4ad]">
              <label htmlFor="command" className="pl-px pr-2 font-bold leading-4">
                Comando:
              </label>
              <input id="command" type="text" className="flex-1 h-4 outline-none" />
            </div>
          </div>
        </div>
        <div className="h-2 pt-[3px]">
          <div className="border-t border-[#b9c0cc]" />
        </div>
        <div className="flex">
          <Grip />
          <div className="flex-1 min-w-0 -ml-[7px]">
            <TabStrip tabs={mainTabs} active="Sólidos" />
            <div className="ml-[7px] -mt-px h-[36px] pt-px border-t border-t-[#a2abbc] border-b-2 border-b-[#cdd1d6] bg-linear-to-b from-[#f6f7f9] to-[#dfe2e7] flex">
              {solidGroups.map((group, i) => (
                <React.Fragment key={group[0]}>
                  {i > 0 && (
                    <div
                      className={clsx(
                        'h-7 mt-px shrink-0',
                        i === 1 ? 'w-[6px] ml-[3px] mr-[3px] border-x border-[#b9bdc6]' : 'w-[3px] mr-[3px] border-r border-[#b9bdc6]',
                      )}
                    />
                  )}
                  {group.map((name) => (
                    <IconButton key={name} name={name} icons={solidIcons} />
                  ))}
                </React.Fragment>
              ))}
            </div>
          </div>
        </div>
        <div className="flex mt-1">
          <Grip />
          <div className="flex-1 min-w-0 -ml-[7px]">
            <TabStrip tabs={goldTabs} active="Dibujo" />
            <div className="ml-[7px] -mt-px h-[36px] pt-px border-t border-[#a2abbc] bg-linear-to-b from-[#f6f7f9] to-[#dfe2e7] flex">
              {Object.keys(drawIcons).map((name) => (
                <IconButton key={name} name={name} icons={drawIcons} />
              ))}
            </div>
          </div>
        </div>
      </header>

      <div className="flex flex-1 min-h-0 pt-[3px]">
        <aside className="w-16 shrink-0 pt-[3px]">
          <div className="h-[3px] ml-[3px] mr-[6px] border-y border-[#b4bbc9]" />
          <div className="grid grid-cols-[28px_28px] pt-[2px] pl-px">
            {Object.keys(sideIcons).map((name) => (
              <IconButton key={name} name={name} icons={sideIcons} />
            ))}
          </div>
        </aside>
        <main className="flex-1 min-w-0 flex flex-col">
          <div className="flex-1 min-h-0 grid grid-cols-2 grid-rows-2 gap-[2px]">
            <Viewport name="Superior" active>
              <TopScene />
            </Viewport>
            <Viewport name="Perspectiva">
              <PerspectiveScene />
            </Viewport>
            <Viewport name="Frontal">
              <FrontScene />
            </Viewport>
            <Viewport name="Derecha">
              <RightScene />
            </Viewport>
          </div>
          <ViewTabs />
        </main>
        <SidePanel />
      </div>

      <StatusBar />
    </div>
  )
}
